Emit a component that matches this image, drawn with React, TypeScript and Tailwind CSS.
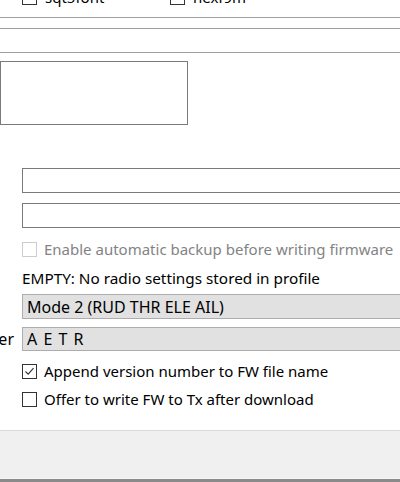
const font = { fontFamily: '"Noto Sans", "Segoe UI", sans-serif' }

function Check({ checked = false, disabled = false }: { checked?: boolean; disabled?: boolean }) {
  return (
    <span
      className={`flex h-[15px] w-[15px] shrink-0 items-center justify-center border bg-white ${
        disabled ? 'border-[#cccccc]' : 'border-[#333333]'
      }`}
    >
      {checked && (
        <svg width="11" height="11" viewBox="0 0 11 11" fill="none">
          <path d="M1.5 5.5 L4.2 8.2 L9.5 2.2" stroke="#333333" strokeWidth="1.1" />
        </svg>
      )}
    </span>
  )
}

function CheckRow({ label, checked, disabled }: { label: string; checked?: boolean; disabled?: boolean }) {
  return (
    <div className="flex h-[20px] items-center gap-[7px] pl-[22px]">
      <Check checked={checked} disabled={disabled} />
      <span className={`whitespace-nowrap ${disabled ? 'text-[#838383]' : 'text-black'}`}>{label}</span>
    </div>
  )
}

export default function App() {
  return (
    <div className="flex h-[482px] w-[400px] flex-col overflow-hidden bg-white text-[15px] leading-[20px]" style={font}>
      {/* partly scrolled-off checkbox row */}
      <div className="h-[18px] border-b border-[#a0a0a0]">
        <div className="mt-[-12px] flex h-[18px] items-center">
          <div className="flex w-[170px] items-center gap-[8px] pl-[22px]">
            <Check />
            <span>sqt5font</span>
          </div>
          <div className="flex items-center gap-[8px]">
            <Check />
            <span>hexf9m</span>
          </div>
        </div>
      </div>
      <div className="h-[11px] border-b border-[#a0a0a0]" />
      <div className="h-[24px] border-b border-[#a0a0a0]" />

      <div className="mt-[8px] h-[64px] w-[188px] border border-[#7a7a7a]" />

      <div className="ml-[22px] mt-[43px] h-[25px] border border-r-0 border-[#7a7a7a]" />
      <div className="ml-[22px] mt-[10px] h-[25px] border border-r-0 border-[#7a7a7a]" />

      <div className="mt-[11px]">
        <CheckRow label="Enable automatic backup before writing firmware" disabled />
      </div>

      <div className="mt-[9px] h-[20px] whitespace-nowrap pl-[22px] text-[15.3px]">
        EMPTY: No radio settings stored in profile
      </div>

      <div className="ml-[22px] mt-[6px] flex h-[25px] items-center border border-r-0 border-[#adadad] bg-[#e1e1e1] pl-[4px] text-[16px]">
        Mode 2 (RUD THR ELE AIL)
      </div>

      <div className="mt-[8px] flex h-[24px]">
        <div className="flex w-[22px] shrink-0 items-center justify-end overflow-hidden pr-[8px]">
          <span className="whitespace-nowrap text-[16px]">Default Channel Order</span>
        </div>
        <div className="flex flex-1 items-center border border-r-0 border-[#adadad] bg-[#e1e1e1] pl-[4px] text-[16px] [word-spacing:2px]">
          A E T R
        </div>
      </div>

      <div className="mt-[10px]">
        <CheckRow label="Append version number to FW file name" checked />
      </div>
      <div className="mt-[8px]">
        <CheckRow label="Offer to write FW to Tx after download" />
      </div>

      <div className="mt-[21px] flex flex-1 flex-col border-t border-[#dadada] bg-[#f0f0f0]">
        <div className="flex-1 border-b border-[#f7f7f7]" />
        <div className="h-[3px] bg-[#8a8a8a]" />
      </div>
    </div>
  )
}
